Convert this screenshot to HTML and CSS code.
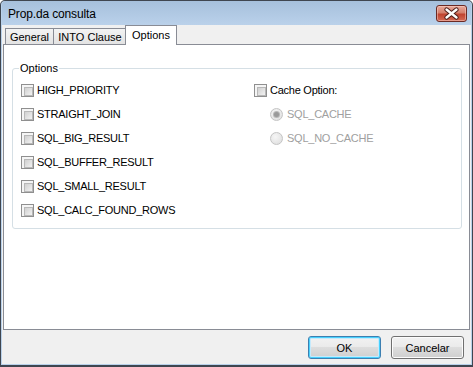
FILE: index.html
```html
<!doctype html>
<html lang="en">
<head>
    <meta charset="UTF-8">
    <title>Prop.da consulta</title>
    <link rel="stylesheet" href="styles.css">
</head>
<body>

<div class="window">
    <div class="titlebar">
        <span class="title">Prop.da consulta</span>
        <span class="close">
            <svg width="29" height="15" viewBox="0 0 29 15">
                <path d="M9.5 3.5 L19.5 11.5 M19.5 3.5 L9.5 11.5" stroke="#4a1c18" stroke-width="4.4" stroke-linecap="round"/>
                <path d="M9.5 3.5 L19.5 11.5 M19.5 3.5 L9.5 11.5" stroke="#ffffff" stroke-width="2.4" stroke-linecap="round"/>
            </svg>
        </span>
    </div>

    <div class="client">
        <div class="tabs">
            <div class="tab tab-general">General</div>
            <div class="tab tab-into">INTO Clause</div>
            <div class="tab tab-active">Options</div>
        </div>

        <div class="panel">
            <fieldset class="group">
                <legend>Options</legend>
                <div class="cols">
                    <div class="col col-left">
                        <label class="row"><span class="check"></span>HIGH_PRIORITY</label>
                        <label class="row"><span class="check"></span>STRAIGHT_JOIN</label>
                        <label class="row"><span class="check"></span>SQL_BIG_RESULT</label>
                        <label class="row"><span class="check"></span>SQL_BUFFER_RESULT</label>
                        <label class="row"><span class="check"></span>SQL_SMALL_RESULT</label>
                        <label class="row"><span class="check"></span>SQL_CALC_FOUND_ROWS</label>
                    </div>
                    <div class="col col-right">
                        <label class="row"><span class="check"></span>Cache Option:</label>
                        <label class="row row-radio disabled"><span class="radio radio-on"></span>SQL_CACHE</label>
                        <label class="row row-radio disabled"><span class="radio"></span>SQL_NO_CACHE</label>
                    </div>
                </div>
            </fieldset>
        </div>

        <div class="buttons">
            <button class="btn btn-default">OK</button>
            <button class="btn">Cancelar</button>
        </div>
    </div>
</div>

</body>
</html>
```

FILE: styles.css
```css
*{
    padding: 0;
    margin: 0;
    box-sizing: border-box;
}

body{
    background: #ffffff;
    font-family: 'Liberation Sans', Arial, sans-serif;
    font-size: 11px;
    color: #000000;
}

.window{
    width: 473px;
    height: 367px;
    border: 1px solid #3f4650;
    border-bottom-width: 2px;
    border-radius: 5px 5px 0 0;
    background: #b9d1ea;
    padding: 0 1px 1px 1px;
    display: flex;
    flex-direction: column;
}

.titlebar{
    height: 24px;
    display: flex;
    align-items: flex-start;
    justify-content: space-between;
    background: linear-gradient(#a6c0dc, #bad1ea);
    border-radius: 4px 4px 0 0;
}
.title{
    font-size: 12px;
    line-height: 14px;
    margin: 6px 0 0 6px;
    letter-spacing: -0.15px;
    color: #000000;
}
.close{
    width: 31px;
    height: 17px;
    margin: 4px 4px 0 0;
    border: 1px solid #6b2a24;
    border-radius: 3px;
    background: linear-gradient(#e9a99b 0%, #d47f6c 45%, #c0432f 55%, #d46a55 100%);
    box-shadow: inset 0 0 0 1px rgba(255, 220, 210, 0.45);
    display: flex;
}

.client{
    flex: 1;
    background: #f0f0f0;
    display: flex;
    flex-direction: column;
}

/* tabs */
.tabs{
    height: 19px;
    display: flex;
    align-items: flex-end;
    padding-left: 3px;
}
.tab{
    height: 16px;
    border: 1px solid #898c95;
    border-bottom: none;
    background: linear-gradient(#f3f3f3, #e3e3e3);
    text-align: center;
    line-height: 15px;
    padding-top: 1px;
}
.tab-general{
    width: 49px;
}
.tab-into{
    width: 73px;
    border-left: none;
}
.tab-active{
    width: 52px;
    height: 20px;
    margin-left: -2px;
    margin-bottom: -1px;
    background: #ffffff;
    border-left: 1px solid #898c95;
    position: relative;
    z-index: 1;
    padding-top: 2px;
}

.panel{
    height: 286px;
    margin: 0 1px;
    border: 1px solid #898c95;
    background: #ffffff;
    padding: 17px 7px 0 8px;
}

/* group box */
.group{
    border: 1px solid #d5dfe5;
    border-radius: 3px;
    height: 167px;
    padding: 0 0 0 8px;
}
.group legend{
    margin-left: -2px;
    padding: 0 1px;
    line-height: 13px;
    color: #000000;
}
.cols{
    display: flex;
    padding-top: 3px;
}
.col-left{
    width: 233px;
}

.row{
    height: 24px;
    display: flex;
    align-items: center;
    gap: 3px;
    white-space: nowrap;
    letter-spacing: -0.25px;
}
.row-radio{
    margin-left: 16px;
    gap: 4px;
}
.disabled{
    color: #a0a0a0;
}

.check{
    width: 13px;
    height: 13px;
    border: 1px solid #8f8f8f;
    background: #f5f5f5;
    padding: 2px;
    flex: none;
}
.check::after{
    content: "";
    display: block;
    width: 7px;
    height: 7px;
    border: 1px solid #b8b8b8;
    background: linear-gradient(135deg, #d0d0d0, #f2f2f2);
}

.radio{
    width: 13px;
    height: 13px;
    border-radius: 50%;
    border: 1px solid #c4c4c4;
    background: radial-gradient(circle at 40% 35%, #f6f6f6, #dcdcdc);
    flex: none;
    display: flex;
    align-items: center;
    justify-content: center;
}
.radio-on::after{
    content: "";
    width: 5px;
    height: 5px;
    border-radius: 50%;
    background: #9a9a9a;
    box-shadow: 0 0 0 1px #b8b8b8;
}

/* buttons */
.buttons{
    display: flex;
    justify-content: flex-end;
    gap: 10px;
    padding: 6px 7px 0 0;
}
.btn{
    width: 73px;
    height: 23px;
    font-family: 'Liberation Sans', Arial, sans-serif;
    font-size: 11px;
    color: #000000;
    border: 1px solid #707070;
    border-radius: 3px;
    background: linear-gradient(#f2f2f2 0%, #ebebeb 45%, #dddddd 50%, #cfcfcf 100%);
    box-shadow: inset 0 0 0 1px #fcfcfc;
}
.btn-default{
    border-color: #3c7fb1;
    box-shadow: inset 0 0 0 1px #48d1fd, inset 0 0 0 2px #c6eafc;
}
```
